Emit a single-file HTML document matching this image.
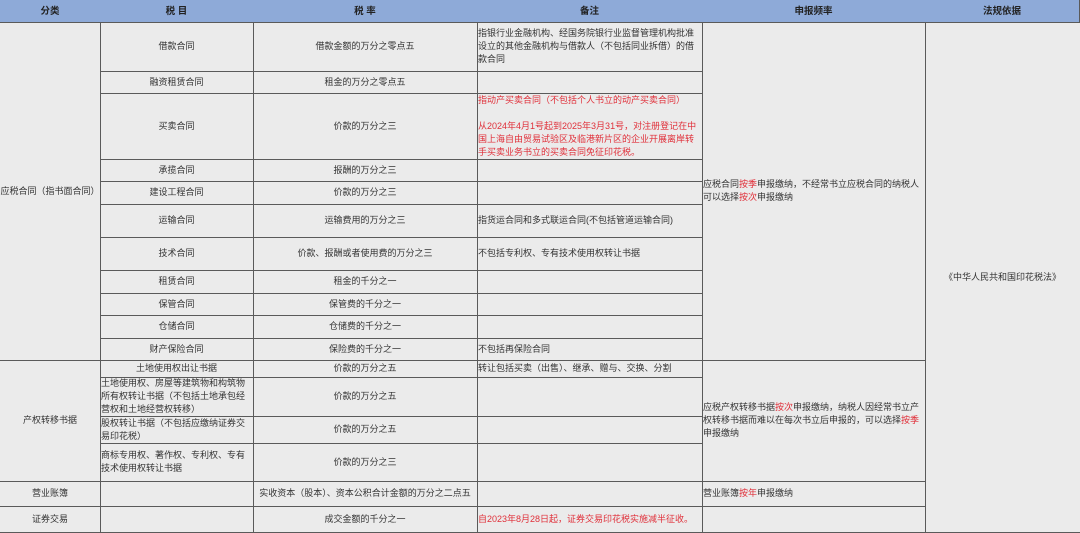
<!DOCTYPE html>
<html><head><meta charset="utf-8"><style>
body{margin:0;width:1080px;height:533px;background:#ebebeb;overflow:hidden;font-family:"Liberation Sans","Noto Sans CJK SC",sans-serif;font-size:9px;color:#333}
.c{position:absolute;box-sizing:border-box;border-right:1px solid #5a5a5a;border-bottom:1px solid #5a5a5a;display:flex;align-items:center;justify-content:center;text-align:center;line-height:13px;padding:0 1px}
.c>div{width:100%}
.l{justify-content:flex-start;text-align:left}
.h{background:#8eaad8;font-weight:bold;color:#222;font-size:9.5px}
.r{color:#e0303a}
.n{white-space:nowrap}
</style></head><body>
<div class="c h" style="left:0;top:0;width:101px;height:23px">分类</div>
<div class="c h" style="left:100px;top:0;width:154px;height:23px">税 目</div>
<div class="c h" style="left:253px;top:0;width:225px;height:23px">税 率</div>
<div class="c h" style="left:477px;top:0;width:226px;height:23px">备注</div>
<div class="c h" style="left:702px;top:0;width:224px;height:23px">申报频率</div>
<div class="c h" style="left:925px;top:0;width:155px;height:23px">法规依据</div>

<div class="c n" style="left:0;top:22px;width:101px;height:339px;padding:0">应税合同（指书面合同）</div>
<div class="c" style="left:0;top:360px;width:101px;height:122px">产权转移书据</div>
<div class="c" style="left:0;top:481px;width:101px;height:26px">营业账簿</div>
<div class="c" style="left:0;top:506px;width:101px;height:27px">证券交易</div>

<div class="c" style="left:100px;top:22px;width:154px;height:50px">借款合同</div>
<div class="c" style="left:253px;top:22px;width:225px;height:50px">借款金额的万分之零点五</div>
<div class="c l" style="left:477px;top:22px;width:226px;height:50px"><div>指银行业金融机构、经国务院银行业监督管理机构批准设立的其他金融机构与借款人（不包括同业拆借）的借款合同</div></div>

<div class="c" style="left:100px;top:71px;width:154px;height:23px">融资租赁合同</div>
<div class="c" style="left:253px;top:71px;width:225px;height:23px">租金的万分之零点五</div>
<div class="c" style="left:477px;top:71px;width:226px;height:23px"></div>

<div class="c" style="left:100px;top:93px;width:154px;height:67px">买卖合同</div>
<div class="c" style="left:253px;top:93px;width:225px;height:67px">价款的万分之三</div>
<div class="c l r" style="left:477px;top:93px;width:226px;height:67px;align-items:flex-start;padding-top:1px"><div>指动产买卖合同（不包括个人书立的动产买卖合同）<br><br>从2024年4月1号起到2025年3月31号，对注册登记在中国上海自由贸易试验区及临港新片区的企业开展离岸转手买卖业务书立的买卖合同免征印花税。</div></div>

<div class="c" style="left:100px;top:159px;width:154px;height:23px">承揽合同</div>
<div class="c" style="left:253px;top:159px;width:225px;height:23px">报酬的万分之三</div>
<div class="c" style="left:477px;top:159px;width:226px;height:23px"></div>

<div class="c" style="left:100px;top:181px;width:154px;height:24px">建设工程合同</div>
<div class="c" style="left:253px;top:181px;width:225px;height:24px">价款的万分之三</div>
<div class="c" style="left:477px;top:181px;width:226px;height:24px"></div>

<div class="c" style="left:100px;top:204px;width:154px;height:34px">运输合同</div>
<div class="c" style="left:253px;top:204px;width:225px;height:34px">运输费用的万分之三</div>
<div class="c l" style="left:477px;top:204px;width:226px;height:34px"><div>指货运合同和多式联运合同(不包括管道运输合同)</div></div>

<div class="c" style="left:100px;top:237px;width:154px;height:34px">技术合同</div>
<div class="c" style="left:253px;top:237px;width:225px;height:34px">价款、报酬或者使用费的万分之三</div>
<div class="c l" style="left:477px;top:237px;width:226px;height:34px"><div>不包括专利权、专有技术使用权转让书据</div></div>

<div class="c" style="left:100px;top:270px;width:154px;height:24px">租赁合同</div>
<div class="c" style="left:253px;top:270px;width:225px;height:24px">租金的千分之一</div>
<div class="c" style="left:477px;top:270px;width:226px;height:24px"></div>

<div class="c" style="left:100px;top:293px;width:154px;height:23px">保管合同</div>
<div class="c" style="left:253px;top:293px;width:225px;height:23px">保管费的千分之一</div>
<div class="c" style="left:477px;top:293px;width:226px;height:23px"></div>

<div class="c" style="left:100px;top:315px;width:154px;height:24px">仓储合同</div>
<div class="c" style="left:253px;top:315px;width:225px;height:24px">仓储费的千分之一</div>
<div class="c" style="left:477px;top:315px;width:226px;height:24px"></div>

<div class="c" style="left:100px;top:338px;width:154px;height:23px">财产保险合同</div>
<div class="c" style="left:253px;top:338px;width:225px;height:23px">保险费的千分之一</div>
<div class="c l" style="left:477px;top:338px;width:226px;height:23px"><div>不包括再保险合同</div></div>

<div class="c" style="left:100px;top:360px;width:154px;height:18px">土地使用权出让书据</div>
<div class="c" style="left:253px;top:360px;width:225px;height:18px">价款的万分之五</div>
<div class="c l" style="left:477px;top:360px;width:226px;height:18px"><div>转让包括买卖（出售）、继承、赠与、交换、分割</div></div>

<div class="c l" style="left:100px;top:377px;width:154px;height:40px"><div>土地使用权、房屋等建筑物和构筑物所有权转让书据（不包括土地承包经营权和土地经营权转移）</div></div>
<div class="c" style="left:253px;top:377px;width:225px;height:40px">价款的万分之五</div>
<div class="c" style="left:477px;top:377px;width:226px;height:40px"></div>

<div class="c l" style="left:100px;top:416px;width:154px;height:28px"><div>股权转让书据（不包括应缴纳证券交易印花税）</div></div>
<div class="c" style="left:253px;top:416px;width:225px;height:28px">价款的万分之五</div>
<div class="c" style="left:477px;top:416px;width:226px;height:28px"></div>

<div class="c l" style="left:100px;top:443px;width:154px;height:39px"><div>商标专用权、著作权、专利权、专有技术使用权转让书据</div></div>
<div class="c" style="left:253px;top:443px;width:225px;height:39px">价款的万分之三</div>
<div class="c" style="left:477px;top:443px;width:226px;height:39px"></div>

<div class="c" style="left:100px;top:481px;width:154px;height:26px"></div>
<div class="c n" style="left:253px;top:481px;width:225px;height:26px">实收资本（股本）、资本公积合计金额的万分之二点五</div>
<div class="c" style="left:477px;top:481px;width:226px;height:26px"></div>

<div class="c" style="left:100px;top:506px;width:154px;height:27px"></div>
<div class="c" style="left:253px;top:506px;width:225px;height:27px">成交金额的千分之一</div>
<div class="c l r" style="left:477px;top:506px;width:226px;height:27px"><div class="n">自2023年8月28日起，证券交易印花税实施减半征收。</div></div>

<div class="c l" style="left:702px;top:22px;width:224px;height:339px"><div>应税合同<span class="r">按季</span>申报缴纳，不经常书立应税合同的纳税人可以选择<span class="r">按次</span>申报缴纳</div></div>
<div class="c l" style="left:702px;top:360px;width:224px;height:122px"><div>应税产权转移书据<span class="r">按次</span>申报缴纳，纳税人因经常书立产权转移书据而难以在每次书立后申报的，可以选择<span class="r">按季</span>申报缴纳</div></div>
<div class="c l" style="left:702px;top:481px;width:224px;height:26px"><div>营业账簿<span class="r">按年</span>申报缴纳</div></div>
<div class="c" style="left:702px;top:506px;width:224px;height:27px"></div>

<div class="c" style="left:925px;top:22px;width:155px;height:511px;border-right:none">《中华人民共和国印花税法》</div>
</body></html>
